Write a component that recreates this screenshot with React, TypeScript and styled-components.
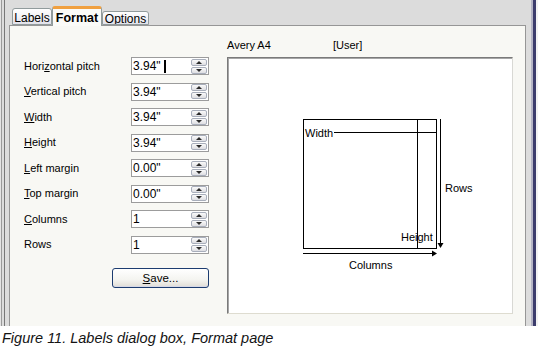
import React from "react";
import styled, { createGlobalStyle } from "styled-components";

const Global = createGlobalStyle`
  html, body { margin: 0; padding: 0; background: #ffffff; }
  body { font-family: "Liberation Sans", Arial, sans-serif; color: #000; }
`;

const Page = styled.div`
  width: 538px;
  height: 354px;
  display: flex;
  flex-direction: column;
  background: #ffffff;
`;

const Dialog = styled.div`
  width: 538px;
  height: 326px;
  box-sizing: border-box;
  background: #dcdcdc;
  padding: 0 12px 0 9px;
  display: flex;
  flex-direction: column;
  box-shadow:
    inset 1px 0 0 #e4e4e4,
    inset 2px 0 0 #9a9a9a,
    inset 4px 0 0 #dcdcdc,
    inset 5px 0 0 #777777,
    inset -2px 0 0 #f2f2f2,
    inset -5px 0 0 #3c3c6c,
    inset -7px 0 0 #b4b4c4;
`;

const TabBar = styled.div`
  height: 25px;
  display: flex;
  align-items: flex-end;
  padding-left: 3px;
  position: relative;
  z-index: 1;
`;

const Tab = styled.div<{ $active?: boolean; $w: number; $h: number }>`
  box-sizing: border-box;
  width: ${(p) => p.$w}px;
  height: ${(p) => p.$h}px;
  display: flex;
  align-items: center;
  justify-content: center;
  border: 1px solid #919b9c;
  border-bottom: ${(p) => (p.$active ? "none" : "1px solid #919b9c")};
  border-top: ${(p) => (p.$active ? "3px solid #f0a040" : "1px solid #919b9c")};
  border-radius: 3px 3px 0 0;
  margin-bottom: ${(p) => (p.$active ? "-1px" : "0")};
  background: ${(p) =>
    p.$active ? "#fbfbf8" : "linear-gradient(#ffffff, #f3f3f6 50%, #e2e2ea)"};
  font-size: ${(p) => (p.$active ? "12.5px" : "12px")};
  font-weight: ${(p) => (p.$active ? "bold" : "normal")};
  color: #000;
  padding-top: ${(p) => (p.$active ? "0" : "2px")};
  overflow: hidden;
  white-space: nowrap;
`;

const Panel = styled.div`
  flex: 1;
  box-sizing: border-box;
  border: 1px solid #969696;
  border-bottom: none;
  background: #f8f8f4;
  padding: 12px 12px 12px 14px;
  display: flex;
  gap: 18px;
`;

const FormCol = styled.div`
  width: 185px;
  padding-top: 19px;
  display: flex;
  flex-direction: column;
`;

const FormGrid = styled.div`
  display: grid;
  grid-template-columns: 107px 78px;
  grid-auto-rows: 18px;
  row-gap: 7.5px;
  align-items: center;
`;

const Label = styled.span`
  font-size: 11px;
  line-height: 13px;
  white-space: nowrap;
`;

const Field = styled.div`
  box-sizing: border-box;
  height: 18px;
  display: flex;
  align-items: center;
  border: 1px solid #9c9c9c;
  background: #ffffff;
  padding-left: 1px;
  font-size: 12px;
`;

const Caret = styled.span`
  width: 2px;
  height: 13px;
  background: #000;
  margin-left: 3px;
`;

const Spin = styled.div`
  margin-left: auto;
  margin-right: 1px;
  width: 16px;
  height: 15px;
  display: flex;
  flex-direction: column;
  gap: 1px;
`;

const SpinHalf = styled.div<{ $down?: boolean }>`
  flex: 1;
  box-sizing: border-box;
  border: 1px solid #a8aebb;
  border-radius: 2px;
  background: linear-gradient(#fafafa, #dedee2);
  display: flex;
  align-items: center;
  justify-content: center;
  &::after {
    content: "";
    width: 0;
    height: 0;
    border-left: 3.5px solid transparent;
    border-right: 3.5px solid transparent;
    ${(p) =>
      p.$down
        ? "border-top: 3px solid #2a2a2a;"
        : "border-bottom: 3px solid #2a2a2a;"}
  }
`;

const SaveButton = styled.button`
  align-self: flex-end;
  margin-top: 14.5px;
  width: 97px;
  height: 20px;
  box-sizing: border-box;
  border: 1px solid #1c3c70;
  border-radius: 3px;
  background: linear-gradient(#ffffff, #f4f4f0 60%, #e0ddd6);
  box-shadow: inset 0 -1px 0 #d6d8e6;
  font-family: "Liberation Sans", Arial, sans-serif;
  font-size: 11.5px;
  color: #000;
  padding: 0;
  display: flex;
  align-items: center;
  justify-content: center;
`;

const PreviewCol = styled.div`
  flex: 1;
  display: flex;
  flex-direction: column;
  gap: 5px;
`;

const PreviewHeader = styled.div`
  height: 14px;
  display: flex;
  align-items: center;
  font-size: 11px;
`;

const HeaderName = styled.span`
  width: 106px;
`;

const PreviewBox = styled.div`
  flex: 1;
  box-sizing: border-box;
  background: #ffffff;
  border-top: 1px solid #7a7a7a;
  border-left: 1px solid #7a7a7a;
  border-right: 1px solid #d8d8d4;
  border-bottom: 1px solid #dedcd0;
  box-shadow: inset 1px 1px 0 #a6a6a6;
  display: flex;
`;

const Diagram = styled.svg`
  display: block;
  width: 100%;
  height: 100%;
  font-family: "Liberation Sans", Arial, sans-serif;
  font-size: 11px;
`;

const Caption = styled.div`
  padding: 4px 0 0 2px;
  font-size: 14.5px;
  line-height: 17px;
  font-style: italic;
  color: #141414;
`;

type Row = { pre: string; key: string; post: string; value: string; caret?: boolean };

const rows: Row[] = [
  { pre: "Hori", key: "z", post: "ontal pitch", value: "3.94\"", caret: true },
  { pre: "", key: "V", post: "ertical pitch", value: "3.94\"" },
  { pre: "", key: "W", post: "idth", value: "3.94\"" },
  { pre: "", key: "H", post: "eight", value: "3.94\"" },
  { pre: "", key: "L", post: "eft margin", value: "0.00\"" },
  { pre: "", key: "T", post: "op margin", value: "0.00\"" },
  { pre: "", key: "C", post: "olumns", value: "1" },
  { pre: "Rows", key: "", post: "", value: "1" },
];

export default function App() {
  return (
    <Page>
      <Global />
      <Dialog>
        <TabBar>
          <Tab $w={40} $h={17}>Labels</Tab>
          <Tab $w={50} $h={20} $active>
            Format
          </Tab>
          <Tab $w={47} $h={14}>Options</Tab>
        </TabBar>
        <Panel>
          <FormCol>
            <FormGrid>
              {rows.map((r, i) => (
                <React.Fragment key={i}>
                  <Label>
                    {r.pre}
                    {r.key && <u>{r.key}</u>}
                    {r.post}
                  </Label>
                  <Field>
                    <span>{r.value}</span>
                    {r.caret && <Caret />}
                    <Spin>
                      <SpinHalf />
                      <SpinHalf $down />
                    </Spin>
                  </Field>
                </React.Fragment>
              ))}
            </FormGrid>
            <SaveButton>
              <u>S</u>ave...
            </SaveButton>
          </FormCol>
          <PreviewCol>
            <PreviewHeader>
              <HeaderName>Avery A4</HeaderName>
              <span>[User]</span>
            </PreviewHeader>
            <PreviewBox>
              <Diagram viewBox="0 0 284 255" preserveAspectRatio="xMinYMin meet">
                <g stroke="#000" strokeWidth={1} fill="none" shapeRendering="crispEdges">
                  <rect x={75.5} y={61.5} width={133} height={129} />
                  <line x1={189.5} y1={61} x2={189.5} y2={191} />
                  <line x1={106} y1={74.5} x2={209} y2={74.5} />
                  <line x1={212.5} y1={61} x2={212.5} y2={186} />
                  <line x1={75} y1={195.5} x2={205} y2={195.5} />
                </g>
                <polygon points="209.5,185 215.5,185 212.5,190" fill="#000" />
                <polygon points="204,192.5 204,198.5 209,195.5" fill="#000" />
                <text x={77} y={78.5} fill="#000">Width</text>
                <text x={173} y={183} fill="#000">Height</text>
                <text x={217} y={134} fill="#000">Rows</text>
                <text x={121} y={211} fill="#000">Columns</text>
              </Diagram>
            </PreviewBox>
          </PreviewCol>
        </Panel>
      </Dialog>
      <Caption>Figure 11. Labels dialog box, Format page</Caption>
    </Page>
  );
}
